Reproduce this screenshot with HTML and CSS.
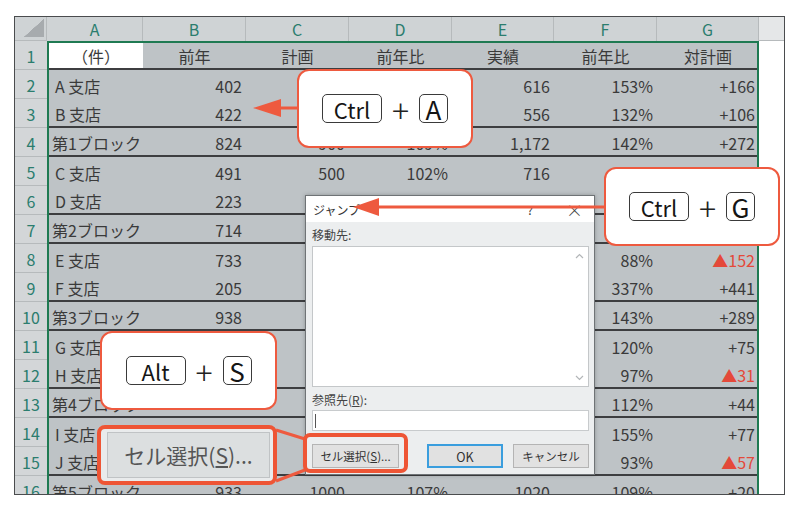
FILE: index.html
```html
<!DOCTYPE html>
<html lang="ja">
<head>
    <meta charset="utf-8">
    <title>ジャンプ セル選択</title>
    <link rel="stylesheet" href="styles.css">
</head>
<body>
<div class="page">
    <div class="sheet">
        <div class="colhead">
            <div class="corner"><span class="corner-tri"></span></div>
            <div class="col-letter">A</div>
            <div class="col-letter">B</div>
            <div class="col-letter">C</div>
            <div class="col-letter">D</div>
            <div class="col-letter">E</div>
            <div class="col-letter">F</div>
            <div class="col-letter">G</div>
            <div class="col-rest"></div>
        </div>
        <div class="main">
            <div class="rowhead">
                <div class="row-num">1</div>
                <div class="row-num">2</div>
                <div class="row-num">3</div>
                <div class="row-num">4</div>
                <div class="row-num">5</div>
                <div class="row-num">6</div>
                <div class="row-num">7</div>
                <div class="row-num">8</div>
                <div class="row-num">9</div>
                <div class="row-num">10</div>
                <div class="row-num">11</div>
                <div class="row-num">12</div>
                <div class="row-num">13</div>
                <div class="row-num">14</div>
                <div class="row-num">15</div>
                <div class="row-num">16</div>
            </div>
            <!-- cells hidden under the callouts and the dialog are left empty -->
            <div class="range">
                <div class="row first rule">
                    <div class="cell head active">（件）</div>
                    <div class="cell head">前年</div>
                    <div class="cell head">計画</div>
                    <div class="cell head">前年比</div>
                    <div class="cell head">実績</div>
                    <div class="cell head">前年比</div>
                    <div class="cell head">対計画</div>
                </div>
                <div class="row">
                    <div class="cell label">A 支店</div>
                    <div class="cell">402</div>
                    <div class="cell"></div>
                    <div class="cell"></div>
                    <div class="cell">616</div>
                    <div class="cell">153%</div>
                    <div class="cell">+166</div>
                </div>
                <div class="row rule">
                    <div class="cell label">B 支店</div>
                    <div class="cell">422</div>
                    <div class="cell"></div>
                    <div class="cell"></div>
                    <div class="cell">556</div>
                    <div class="cell">132%</div>
                    <div class="cell">+106</div>
                </div>
                <div class="row rule">
                    <div class="cell label block">第1ブロック</div>
                    <div class="cell">824</div>
                    <div class="cell">900</div>
                    <div class="cell">109%</div>
                    <div class="cell">1,172</div>
                    <div class="cell">142%</div>
                    <div class="cell">+272</div>
                </div>
                <div class="row">
                    <div class="cell label">C 支店</div>
                    <div class="cell">491</div>
                    <div class="cell">500</div>
                    <div class="cell">102%</div>
                    <div class="cell">716</div>
                    <div class="cell"></div>
                    <div class="cell"></div>
                </div>
                <div class="row rule">
                    <div class="cell label">D 支店</div>
                    <div class="cell">223</div>
                    <div class="cell"></div>
                    <div class="cell"></div>
                    <div class="cell"></div>
                    <div class="cell"></div>
                    <div class="cell"></div>
                </div>
                <div class="row rule">
                    <div class="cell label block">第2ブロック</div>
                    <div class="cell">714</div>
                    <div class="cell"></div>
                    <div class="cell"></div>
                    <div class="cell"></div>
                    <div class="cell"></div>
                    <div class="cell"></div>
                </div>
                <div class="row">
                    <div class="cell label">E 支店</div>
                    <div class="cell">733</div>
                    <div class="cell"></div>
                    <div class="cell"></div>
                    <div class="cell"></div>
                    <div class="cell">88%</div>
                    <div class="cell neg">▲152</div>
                </div>
                <div class="row rule">
                    <div class="cell label">F 支店</div>
                    <div class="cell">205</div>
                    <div class="cell"></div>
                    <div class="cell"></div>
                    <div class="cell"></div>
                    <div class="cell">337%</div>
                    <div class="cell">+441</div>
                </div>
                <div class="row rule">
                    <div class="cell label block">第3ブロック</div>
                    <div class="cell">938</div>
                    <div class="cell"></div>
                    <div class="cell"></div>
                    <div class="cell"></div>
                    <div class="cell">143%</div>
                    <div class="cell">+289</div>
                </div>
                <div class="row">
                    <div class="cell label">G 支店</div>
                    <div class="cell"></div>
                    <div class="cell"></div>
                    <div class="cell"></div>
                    <div class="cell"></div>
                    <div class="cell">120%</div>
                    <div class="cell">+75</div>
                </div>
                <div class="row rule">
                    <div class="cell label">H 支店</div>
                    <div class="cell"></div>
                    <div class="cell"></div>
                    <div class="cell"></div>
                    <div class="cell"></div>
                    <div class="cell">97%</div>
                    <div class="cell neg">▲31</div>
                </div>
                <div class="row rule">
                    <div class="cell label block">第4ブロック</div>
                    <div class="cell"></div>
                    <div class="cell"></div>
                    <div class="cell"></div>
                    <div class="cell"></div>
                    <div class="cell">112%</div>
                    <div class="cell">+44</div>
                </div>
                <div class="row">
                    <div class="cell label">I 支店</div>
                    <div class="cell"></div>
                    <div class="cell"></div>
                    <div class="cell"></div>
                    <div class="cell"></div>
                    <div class="cell">155%</div>
                    <div class="cell">+77</div>
                </div>
                <div class="row rule">
                    <div class="cell label">J 支店</div>
                    <div class="cell"></div>
                    <div class="cell"></div>
                    <div class="cell"></div>
                    <div class="cell"></div>
                    <div class="cell">93%</div>
                    <div class="cell neg">▲57</div>
                </div>
                <div class="row">
                    <div class="cell label block">第5ブロック</div>
                    <div class="cell">933</div>
                    <div class="cell">1000</div>
                    <div class="cell">107%</div>
                    <div class="cell">1020</div>
                    <div class="cell">109%</div>
                    <div class="cell">+20</div>
                </div>
            </div>
            <div class="blank"></div>
        </div>
    </div>

    <div class="dialog">
        <div class="dlg-title">
            <span class="dlg-name">ジャンプ</span>
            <span class="dlg-help">?</span>
            <span class="dlg-close">×</span>
        </div>
        <div class="dlg-body">
            <div class="dlg-label">移動先:</div>
            <div class="listbox">
                <div class="list-area"></div>
                <div class="scrollbar">
                    <svg width="9" height="6" viewBox="0 0 9 6"><path d="M1 5 L4.5 1.5 L8 5" fill="none" stroke="#b3b6b8" stroke-width="1.2"/></svg>
                    <svg width="9" height="6" viewBox="0 0 9 6"><path d="M1 1 L4.5 4.5 L8 1" fill="none" stroke="#b3b6b8" stroke-width="1.2"/></svg>
                </div>
            </div>
            <div class="dlg-label ref">参照先(<u>R</u>):</div>
            <div class="input"><span class="caret"></span></div>
            <div class="dlg-buttons">
                <div class="btn">セル選択(<u>S</u>)...</div>
                <div class="btn-pair">
                    <div class="btn default">OK</div>
                    <div class="btn">キャンセル</div>
                </div>
            </div>
        </div>
    </div>

    <svg class="marks" width="800" height="510" viewBox="0 0 800 510">
        <line x1="276" y1="108" x2="298" y2="108" stroke="#ee5a3f" stroke-width="3"/>
        <polygon points="253,108 281,99 281,117" fill="#ee5a3f"/>
        <line x1="376" y1="207" x2="605" y2="207" stroke="#ee5a3f" stroke-width="3"/>
        <polygon points="353,207 379,198 379,216" fill="#ee5a3f"/>
        <line x1="276" y1="430" x2="305" y2="439" stroke="#ee5a3f" stroke-width="3"/>
        <line x1="276" y1="481" x2="305" y2="470" stroke="#ee5a3f" stroke-width="3"/>
    </svg>

    <div class="callout callout-a">
        <span class="key wide">Ctrl</span><span class="plus">+</span><span class="key">A</span>
    </div>
    <div class="callout callout-g">
        <span class="key wide">Ctrl</span><span class="plus">+</span><span class="key">G</span>
    </div>
    <div class="callout callout-s">
        <span class="key wide">Alt</span><span class="plus">+</span><span class="key">S</span>
    </div>

    <div class="highlight"></div>
    <div class="zoom-btn">
        <div class="zoom-face">セル選択(<u>S</u>)...</div>
    </div>
</div>
</body>
</html>
```

FILE: styles.css
```css
* {
    margin: 0;
    padding: 0;
    box-sizing: border-box;
}

body {
    background: #fff;
    color: #333;
    font-family: "Noto Sans CJK JP", "Noto Sans", sans-serif;
}

.page {
    position: relative;
    width: 800px;
    height: 510px;
    overflow: hidden;
}

/* spreadsheet */

.sheet {
    margin: 16px 0 0 14px;
    width: 771px;
    height: 479px;
    border: 1px solid #4a4c4e;
    overflow: hidden;
    display: flex;
    flex-direction: column;
}

.colhead {
    display: grid;
    grid-template-columns: 32px 96px 103px 103px 103px 102px 103px 102px 25px;
    height: 24px;
    flex: none;
    background: #cfd3d5;
}

.corner {
    display: flex;
    align-items: flex-end;
    justify-content: flex-end;
    padding: 0 2px 3px 0;
    border-bottom: 1px solid #b6babc;
    border-right: 1px solid #b6babc;
}

.corner-tri {
    width: 20px;
    height: 18px;
    background: linear-gradient(to top left, #a7abae 50%, transparent 51%);
}

.col-letter {
    display: flex;
    align-items: center;
    justify-content: center;
    color: #2b7d6e;
    font-size: 16px;
    border-right: 1px solid #b6babc;
}

.col-rest {
    background: #e5e7e8;
    border-bottom: 1px solid #b6babc;
}

.main {
    display: flex;
    flex: 1;
    min-height: 0;
}

.rowhead {
    width: 32px;
    flex: none;
    background: #d3d6d8;
}

.row-num {
    height: 29px;
    display: flex;
    align-items: center;
    justify-content: center;
    padding-top: 2px;
    color: #2b7d6e;
    font-size: 16px;
    border-bottom: 1px solid #b6babc;
}

.range {
    width: 712px;
    flex: none;
    background: #bec3c6;
    border: 2px solid #1f7a52;
    border-bottom: none;
}

.blank {
    flex: 1;
    background: #fff;
}

.row {
    display: grid;
    grid-template-columns: 94px 103px 103px 103px 102px 103px 100px;
    height: 29px;
}

.row.first {
    height: 27px;
}

.row.rule {
    border-bottom: 2px solid #3d3e40;
}

.cell {
    display: flex;
    align-items: center;
    justify-content: flex-end;
    padding: 2px 4px 0;
    font-size: 16px;
    white-space: nowrap;
    overflow: hidden;
    color: #3a3a3a;
}

.cell:last-child {
    padding-right: 2px;
}

.cell.head {
    justify-content: center;
    padding-top: 0;
}

.cell.active {
    background: #fff;
}

.cell.label {
    justify-content: flex-start;
    padding-left: 6px;
}

.cell.label.block {
    padding-left: 3px;
}

.cell.neg {
    color: #e4493a;
}

/* jump dialog */

.dialog {
    position: absolute;
    left: 305px;
    top: 195px;
    width: 290px;
    height: 280px;
    background: #eceeef;
    border: 1px solid #6f7376;
    box-shadow: 0 0 4px rgba(0, 0, 0, 0.25);
    display: flex;
    flex-direction: column;
    font-size: 12px;
    color: #333;
}

.dlg-title {
    height: 26px;
    flex: none;
    background: #fff;
    display: flex;
    align-items: center;
    padding: 0 14px 0 7px;
}

.dlg-name {
    flex: 1;
}

.dlg-help {
    width: 14px;
    text-align: center;
    margin-right: 29px;
}

.dlg-close {
    width: 14px;
    text-align: center;
    font-size: 17px;
    font-weight: 300;
    color: #444;
}

.dlg-body {
    padding: 5px 5px 0 6px;
    display: flex;
    flex-direction: column;
}

.dlg-label {
    height: 15px;
    line-height: 15px;
    color: #444;
}

.dlg-label.ref {
    margin-top: 5px;
}

.listbox {
    margin-top: 4px;
    height: 141px;
    background: #fff;
    border: 1px solid #c4c7c9;
    display: flex;
}

.list-area {
    flex: 1;
}

.scrollbar {
    width: 17px;
    display: flex;
    flex-direction: column;
    justify-content: space-between;
    align-items: center;
    padding: 6px 0 5px;
}

.input {
    margin-top: 3px;
    height: 21px;
    background: #fff;
    border: 1px solid #c8cbcd;
    padding: 3px 0 0 2px;
}

.caret {
    display: block;
    width: 1px;
    height: 14px;
    background: #555;
}

.dlg-buttons {
    margin-top: 13px;
    display: flex;
    justify-content: space-between;
}

.btn-pair {
    display: flex;
    gap: 10px;
}

.btn {
    width: 87px;
    height: 24px;
    display: flex;
    align-items: center;
    justify-content: center;
    background: #e1e1e1;
    border: 1px solid #b4b4b4;
    font-size: 11.5px;
    color: #333;
}

.btn-pair .btn {
    width: 76px;
}

.btn.default {
    border: 2px solid #3a9ede;
    font-size: 12.5px;
}

/* annotations */

.marks {
    position: absolute;
    left: 0;
    top: 0;
}

.callout {
    position: absolute;
    width: 176px;
    height: 79px;
    background: #fff;
    border: 2px solid #ee5a3f;
    border-radius: 12px;
    display: flex;
    align-items: center;
    justify-content: center;
}

.callout-a {
    left: 297px;
    top: 69px;
}

.callout-g {
    left: 604px;
    top: 167px;
}

.callout-s {
    left: 100px;
    top: 331px;
    width: 177px;
}

.key {
    width: 29px;
    height: 29px;
    border: 1.3px solid #3a3a3a;
    border-radius: 5px;
    display: flex;
    align-items: center;
    justify-content: center;
    font-size: 26px;
    line-height: 1;
    color: #151515;
}

.key.wide {
    width: 60px;
    font-size: 22px;
}

.plus {
    width: 37px;
    text-align: center;
    font-size: 32px;
    font-weight: 300;
    color: #222;
    line-height: 1;
}

.highlight {
    position: absolute;
    left: 303px;
    top: 433px;
    width: 105px;
    height: 40px;
    border: 4px solid #ee5535;
    border-radius: 7px;
}

.zoom-btn {
    position: absolute;
    left: 97px;
    top: 425px;
    width: 180px;
    height: 60px;
    border: 4px solid #ee5535;
    border-radius: 8px;
    background: #e9ebec;
    padding: 3px 3px 3px 6px;
}

.zoom-face {
    height: 100%;
    background: #dcdfe0;
    border: 1px solid #c0c3c5;
    display: flex;
    align-items: center;
    justify-content: center;
    font-size: 21px;
    color: #555;
}
```
